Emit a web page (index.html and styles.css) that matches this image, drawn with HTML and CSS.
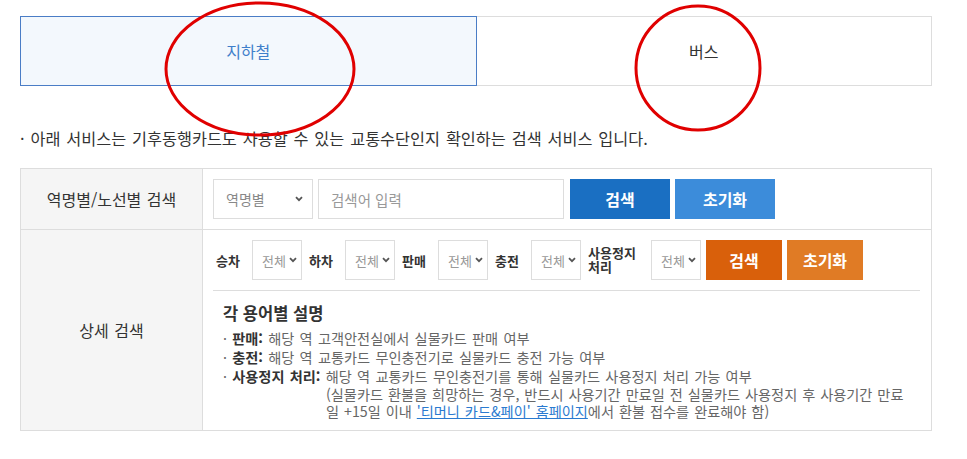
FILE: index.html
```html
<!DOCTYPE html>
<html lang="ko">
<head>
    <meta charset="UTF-8">
    <meta name="viewport" content="width=device-width, initial-scale=1.0">
    <title>기후동행카드 사용처 검색</title>
    <link rel="stylesheet" href="styles.css">
</head>
<body>
    <div class="wrap">
        <ul class="tabs">
            <li class="tab on">지하철</li>
            <li class="tab">버스</li>
        </ul>

        <p class="notice">· 아래 서비스는 기후동행카드도 사용할 수 있는 교통수단인지 확인하는 검색 서비스 입니다.</p>

        <div class="search-box">
            <div class="row">
                <div class="row-tit">역명별/노선별 검색</div>
                <div class="row-con keyword">
                    <div class="sel-wrap sel-lg">
                        <select><option>역명별</option><option>노선별</option></select>
                        <svg width="8" height="6" viewBox="0 0 8 6"><path d="M1 1.2l3 3 3-3" fill="none" stroke="#555" stroke-width="1.8"/></svg>
                    </div>
                    <input type="text" class="kw" placeholder="검색어 입력">
                    <button class="btn btn-blue">검색</button>
                    <button class="btn btn-sky">초기화</button>
                </div>
            </div>
            <div class="row">
                <div class="row-tit">상세 검색</div>
                <div class="row-con">
                    <div class="filter">
                        <label class="lbl">승차</label>
                        <div class="sel-wrap">
                            <select><option>전체</option></select>
                            <svg width="8" height="6" viewBox="0 0 8 6"><path d="M1 1.2l3 3 3-3" fill="none" stroke="#555" stroke-width="1.8"/></svg>
                        </div>
                        <label class="lbl">하차</label>
                        <div class="sel-wrap">
                            <select><option>전체</option></select>
                            <svg width="8" height="6" viewBox="0 0 8 6"><path d="M1 1.2l3 3 3-3" fill="none" stroke="#555" stroke-width="1.8"/></svg>
                        </div>
                        <label class="lbl">판매</label>
                        <div class="sel-wrap">
                            <select><option>전체</option></select>
                            <svg width="8" height="6" viewBox="0 0 8 6"><path d="M1 1.2l3 3 3-3" fill="none" stroke="#555" stroke-width="1.8"/></svg>
                        </div>
                        <label class="lbl">충전</label>
                        <div class="sel-wrap">
                            <select><option>전체</option></select>
                            <svg width="8" height="6" viewBox="0 0 8 6"><path d="M1 1.2l3 3 3-3" fill="none" stroke="#555" stroke-width="1.8"/></svg>
                        </div>
                        <label class="lbl lbl-wide">사용정지 처리</label>
                        <div class="sel-wrap">
                            <select><option>전체</option></select>
                            <svg width="8" height="6" viewBox="0 0 8 6"><path d="M1 1.2l3 3 3-3" fill="none" stroke="#555" stroke-width="1.8"/></svg>
                        </div>
                        <button class="btn btn-orange">검색</button>
                        <button class="btn btn-amber">초기화</button>
                    </div>

                    <div class="guide">
                        <h4>각 용어별 설명</h4>
                        <ul>
                            <li>· <b>판매:</b> 해당 역 고객안전실에서 실물카드 판매 여부</li>
                            <li>· <b>충전:</b> 해당 역 교통카드 무인충전기로 실물카드 충전 가능 여부</li>
                            <li>· <b>사용정지 처리:</b> 해당 역 교통카드 무인충전기를 통해 실물카드 사용정지 처리 가능 여부
                                <span class="sub">(실물카드 환불을 희망하는 경우, 반드시 사용기간 만료일 전 실물카드 사용정지 후 사용기간 만료<br>일 +15일 이내 <a href="#">'티머니 카드&amp;페이' 홈페이지</a>에서 환불 접수를 완료해야 함)</span>
                            </li>
                        </ul>
                    </div>
                </div>
            </div>
        </div>
    </div>

    <svg class="marks" width="967" height="459" viewBox="0 0 967 459">
        <ellipse cx="260" cy="69" rx="94" ry="66" fill="none" stroke="#e00000" stroke-width="3"/>
        <ellipse cx="698" cy="68" rx="62" ry="62" fill="none" stroke="#e00000" stroke-width="3"/>
    </svg>
</body>
</html>
```

FILE: styles.css
```css
*{
    margin: 0;
    padding: 0;
    box-sizing: border-box;
}

li{
    list-style: none;
}

body{
    font-family: "Noto Sans CJK KR", "Malgun Gothic", sans-serif;
    color: #333;
    background: #fff;
}

.wrap{
    width: 912px;
    margin-left: 20px;
    padding-top: 16px;
}

/* tabs */
.tabs{
    display: flex;
}

.tab{
    flex: 1;
    height: 70px;
    display: flex;
    align-items: center;
    justify-content: center;
    font-size: 16px;
    color: #333;
    border: 1px solid #ddd;
    border-left: 0;
}

.tab.on{
    background: #f3f8fd;
    border: 1px solid #4a7dc6;
    color: #3f7fcb;
}

.notice{
    margin-top: 40px;
    font-size: 16.3px;
    line-height: 24px;
    word-spacing: 1.3px;
    color: #333;
}

/* search table */
.search-box{
    margin-top: 18px;
    border: 1px solid #ddd;
}

.row{
    display: flex;
}

.row + .row{
    border-top: 1px solid #ddd;
}

.row-tit{
    width: 182px;
    flex-shrink: 0;
    display: flex;
    align-items: center;
    justify-content: center;
    background: #f5f5f5;
    border-right: 1px solid #ddd;
    font-size: 16px;
    word-spacing: 1px;
    color: #333;
}

.row-con{
    flex: 1;
    padding: 10px 11px 10px 10px;
}

.keyword{
    display: flex;
    gap: 5px;
}

.sel-wrap{
    position: relative;
}

.sel-wrap select{
    appearance: none;
    -webkit-appearance: none;
    width: 50px;
    height: 40px;
    padding-left: 9px;
    border: 1px solid #ddd;
    border-radius: 0;
    background: #fff;
    font-family: inherit;
    font-size: 13px;
    color: #999;
}

.sel-wrap svg{
    position: absolute;
    right: 5px;
    top: 17px;
    pointer-events: none;
}

.sel-lg select{
    width: 100px;
    padding-left: 12px;
    font-size: 14px;
    color: #888;
}

.sel-lg svg{
    right: 10px;
}

.kw{
    width: 246px;
    height: 40px;
    margin-right: 1px;
    padding-left: 12px;
    border: 1px solid #ddd;
    font-family: inherit;
    font-size: 14.5px;
}

.kw::placeholder{
    color: #999;
}

.btn{
    width: 100px;
    height: 40px;
    border: 0;
    font-family: inherit;
    font-size: 16px;
    font-weight: bold;
    color: #fff;
}

.btn-blue{
    background: #1a6fc2;
}

.btn-sky{
    background: #3c8cda;
}

.btn-orange{
    width: 76px;
    margin-left: 5px;
    margin-right: 5px;
    background: #d9600b;
}

.btn-amber{
    width: 76px;
    background: #e07b25;
}

/* detail filter */
.filter{
    display: flex;
    align-items: center;
    padding-bottom: 10px;
    border-bottom: 1px solid #ddd;
}

.lbl{
    width: 25px;
    margin: 0 11px 0 3px;
    font-size: 13px;
    font-weight: bold;
    white-space: nowrap;
    color: #333;
}

.sel-wrap + .lbl{
    margin-left: 7px;
}

.lbl-wide{
    width: 54px;
    margin-right: 9px;
    white-space: normal;
    line-height: 14px;
}

/* guide */
.guide{
    padding: 10px 0 0 10px;
}

.guide h4{
    font-size: 16.5px;
    line-height: 24px;
    color: #333;
}

.guide ul{
    margin-top: 4px;
}

.guide li{
    font-size: 14.2px;
    line-height: 19px;
    word-spacing: 1.3px;
    color: #666;
}

.guide b{
    color: #333;
}

.guide .sub{
    display: block;
    padding-left: 103px;
    line-height: 17px;
    word-spacing: 1px;
    white-space: nowrap;
}

.guide a{
    color: #2a7ad0;
}

.marks{
    position: absolute;
    left: 0;
    top: 0;
    pointer-events: none;
}
```
